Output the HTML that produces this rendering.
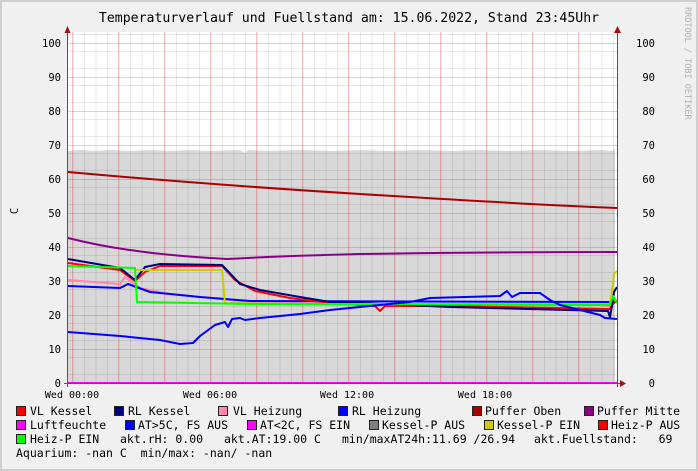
<!DOCTYPE html>
<html><head><meta charset="utf-8"><style>
html,body{margin:0;padding:0;background:#f0f0f0;}
svg{display:block;}
text{font-family:"DejaVu Sans Mono","Liberation Mono",monospace;fill:#000;white-space:pre;}
</style></head><body>
<svg width="698" height="471" viewBox="0 0 698 471" xmlns="http://www.w3.org/2000/svg" xml:space="preserve">
<defs>
<pattern id="vg" x="72.5" y="0" width="11.5" height="471" patternUnits="userSpaceOnUse"><rect x="0" y="0" width="1" height="471" fill="rgba(0,0,0,0.09)"/></pattern>
<pattern id="vr" x="72" y="0" width="46" height="471" patternUnits="userSpaceOnUse"><rect x="0" y="0" width="1" height="471" fill="rgba(230,0,0,0.22)"/></pattern>
<pattern id="hg" x="0" y="0" width="698" height="17" patternUnits="userSpaceOnUse"><rect x="0" y="0" width="698" height="1" fill="rgba(0,0,0,0.09)"/></pattern>
<pattern id="hr" x="0" y="43" width="698" height="34" patternUnits="userSpaceOnUse"><rect x="0" y="0" width="698" height="1" fill="rgba(230,0,0,0.22)"/></pattern>
</defs>
<rect x="0" y="0" width="698" height="471" fill="#cfcfcf"/>
<rect x="2" y="2" width="694" height="467" fill="#f0f0f0"/>
<text x="349" y="22" font-size="13.2" text-anchor="middle">Temperaturverlauf und Fuellstand am: 15.06.2022, Stand 23:45Uhr</text>
<text x="0" y="0" font-size="8.5" style="fill:#b0b0b0" transform="translate(685,7) rotate(90)">RRDTOOL / TOBI OETIKER</text>
<rect x="68" y="32" width="549" height="351" fill="#fff"/>
<path d="M68,383 L68,151 L80,150 L95,151 L110,150 L130,151 L150,150 L170,151 L190,150 L210,151 L240,150 L245,153 L248,150 L270,151 L300,150 L330,151 L360,150 L390,151 L420,150 L450,151 L480,150 L510,151 L540,150 L570,151 L600,150 L613,151 L615,148 L615,383 Z" fill="#d8d8d8"/>
<rect x="68" y="32" width="549" height="351" fill="url(#vg)"/>
<rect x="68" y="32" width="549" height="351" fill="url(#hg)"/>
<rect x="68" y="32" width="549" height="351" fill="url(#vr)"/>
<rect x="68" y="32" width="549" height="351" fill="url(#hr)"/>
<g fill="none" stroke-width="2" stroke-linejoin="round">
<path stroke="#aa0000" d="M68,172 Q200,184 360,194 T617,208"/>
<path stroke="#880088" d="M68,238 Q100,246 130,250 Q170,256 227,259 Q280,256 360,254 Q500,252 617,252"/>
<path stroke="#ff88aa" d="M68,280 L120,284 L125,277 L140,288 L170,294 L200,297 L260,303 L380,304 L600,305 L610,306"/>
<path stroke="#0000ff" d="M68,286 L120,288 L128,284 L150,292 L200,297 L250,301 L617,302"/>
<path stroke="#ff0000" d="M68,263 L120,270 L135,281 L145,272 L160,266 L222,266 L235,280 L255,291 L290,298 L330,303 L375,306 L380,311 L385,306 L450,306 L610,309 L612,305 L617,300"/>
<path stroke="#000080" d="M68,259 L120,268 L135,280 L145,267 L160,264 L222,265 L240,284 L260,290 L300,297 L330,302 L360,303 L450,307 L608,311 L610,317 L612,306 L614,292 L617,287"/>
<path stroke="#cccc00" d="M135,270 L222,270 L225,303 L300,304 L610,304 L613,283 L614,274 L617,271"/>
<path stroke="#00ff00" d="M68,266 L135,268 L137,302 L250,304 L610,305 L613,296 L617,303"/>
<path stroke="#0000ff" d="M68,332 L120,336 L160,340 L180,344 L193,343 L200,336 L215,325 L225,322 L228,327 L232,319 L240,318 L245,320 L260,318 L300,314 L330,310 L350,308 L380,305 L410,302 L430,298 L500,296 L507,291 L512,297 L520,293 L540,293 L550,300 L560,305 L580,310 L600,315 L605,318 L617,319"/>
</g>
<rect x="68" y="382" width="550" height="2" fill="#ff00ff"/>
<rect x="67" y="30" width="1" height="357" fill="#555"/>
<rect x="617" y="30" width="1" height="357" fill="#555"/>
<rect x="64" y="383" width="558" height="1" fill="#555"/>
<path d="M64.5,33 L67.5,26 L70.5,33 Z M614,33 L617.5,26 L621,33 Z M620,380 L626,383.5 L620,387 Z" fill="#a01010"/>
<g font-size="10.5" text-anchor="end">
<text x="61" y="47">100</text><text x="61" y="81">90</text><text x="61" y="115">80</text><text x="61" y="149">70</text><text x="61" y="183">60</text><text x="61" y="217">50</text><text x="61" y="251">40</text><text x="61" y="285">30</text><text x="61" y="319">20</text><text x="61" y="353">10</text><text x="61" y="387">0</text>
<text x="655" y="47">100</text><text x="655" y="81">90</text><text x="655" y="115">80</text><text x="655" y="149">70</text><text x="655" y="183">60</text><text x="655" y="217">50</text><text x="655" y="251">40</text><text x="655" y="285">30</text><text x="655" y="319">20</text><text x="655" y="353">10</text><text x="655" y="387">0</text>
</g>
<text font-size="10.5" transform="translate(18,211) rotate(-90)" text-anchor="middle">C</text>
<g font-size="10" text-anchor="middle">
<text x="72" y="398">Wed 00:00</text><text x="210" y="398">Wed 06:00</text><text x="347" y="398">Wed 12:00</text><text x="485" y="398">Wed 18:00</text>
</g>
<g stroke="#222" stroke-width="1">
<rect x="16.5" y="406.5" width="9" height="9" fill="#ff0000"/>
<rect x="114.5" y="406.5" width="9" height="9" fill="#000080"/>
<rect x="218.5" y="406.5" width="9" height="9" fill="#ff88aa"/>
<rect x="338.5" y="406.5" width="9" height="9" fill="#0000ff"/>
<rect x="472.5" y="406.5" width="9" height="9" fill="#aa0000"/>
<rect x="584.5" y="406.5" width="9" height="9" fill="#880088"/>
<rect x="16.5" y="420.5" width="9" height="9" fill="#ff00ff"/>
<rect x="125.5" y="420.5" width="9" height="9" fill="#0000ff"/>
<rect x="247.5" y="420.5" width="9" height="9" fill="#ff00ff"/>
<rect x="369.5" y="420.5" width="9" height="9" fill="#808080"/>
<rect x="484.5" y="420.5" width="9" height="9" fill="#cccc00"/>
<rect x="598.5" y="420.5" width="9" height="9" fill="#ff0000"/>
<rect x="16.5" y="434.5" width="9" height="9" fill="#00ff00"/>
</g>
<g font-size="11.5">
<text x="30" y="415">VL Kessel</text><text x="128" y="415">RL Kessel</text><text x="233" y="415">VL Heizung</text><text x="352" y="415">RL Heizung</text><text x="485" y="415">Puffer Oben</text><text x="597" y="415">Puffer Mitte</text>
<text x="30" y="429">Luftfeuchte</text><text x="138" y="429">AT&gt;5C, FS AUS</text><text x="260" y="429">AT&lt;2C, FS EIN</text><text x="382" y="429">Kessel-P AUS</text><text x="497" y="429">Kessel-P EIN</text><text x="611" y="429">Heiz-P AUS</text>
<text x="30" y="443">Heiz-P EIN</text><text x="120" y="443">akt.rH: 0.00</text><text x="224" y="443">akt.AT:19.00 C</text><text x="342" y="443">min/maxAT24h:11.69 /26.94</text><text x="534" y="443">akt.Fuellstand:   69</text>
<text x="16" y="457">Aquarium: -nan C  min/max: -nan/ -nan</text>
</g>
</svg>
</body></html>
